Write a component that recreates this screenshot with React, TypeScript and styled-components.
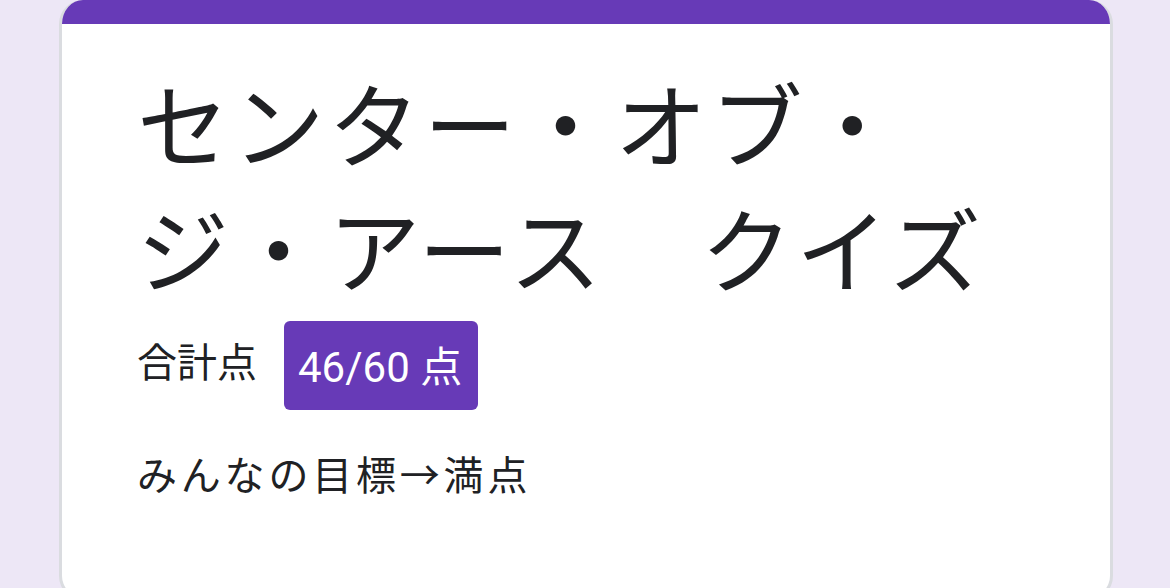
import styled, { createGlobalStyle } from 'styled-components'

const GlobalStyle = createGlobalStyle`
    html, body {
        margin: 0;
        padding: 0;
        background: #ede7f6;
    }
    body {
        font-family: 'Noto Sans CJK JP', 'Noto Sans', sans-serif;
        color: #202124;
    }
`

export default function App() {
    return (
        <>
            <GlobalStyle />
            <Page>
                <Card>
                    <TopBar />
                    <Body>
                        <Title>センター・オブ・ジ・アース　クイズ</Title>
                        <ScoreRow>
                            <ScoreLabel>合計点</ScoreLabel>
                            <ScoreBadge>46/60 点</ScoreBadge>
                        </ScoreRow>
                        <Description>みんなの目標→満点</Description>
                    </Body>
                </Card>
            </Page>
        </>
    )
}

const Page = styled.div`
    width: 1170px;
    height: 588px;
    overflow: hidden;
    padding: 0 57px 0 59px;
    box-sizing: border-box;
`
const Card = styled.div`
    background: #ffffff;
    border: 3px solid #dadce0;
    border-top: none;
    border-radius: 24px;
    overflow: hidden;
    height: 600px;
    box-sizing: border-box;
`
const TopBar = styled.div`
    height: 24px;
    background: #673ab7;
    margin: 0 -3px;
`
const Body = styled.div`
    padding: 34px 60px 0 75px;
`
const Title = styled.h1`
    margin: 0;
    font-size: 92px;
    font-weight: 400;
    line-height: 125px;
    letter-spacing: 3.6px;
`
const ScoreRow = styled.div`
    display: flex;
    align-items: center;
    gap: 27px;
    margin-top: 13px;
`
const ScoreLabel = styled.span`
    font-size: 40px;
    line-height: 60px;
    margin-bottom: 12px;
`
const ScoreBadge = styled.span`
    display: inline-flex;
    align-items: center;
    height: 89px;
    padding: 0 16px 4px 14px;
    box-sizing: border-box;
    border-radius: 6px;
    background: #673ab7;
    color: #ffffff;
    font-family: Roboto, 'Noto Sans CJK JP', sans-serif;
    font-size: 42px;
`
const Description = styled.p`
    margin: 33px 0 0;
    font-size: 40px;
    line-height: 60px;
    letter-spacing: 3.8px;
`
